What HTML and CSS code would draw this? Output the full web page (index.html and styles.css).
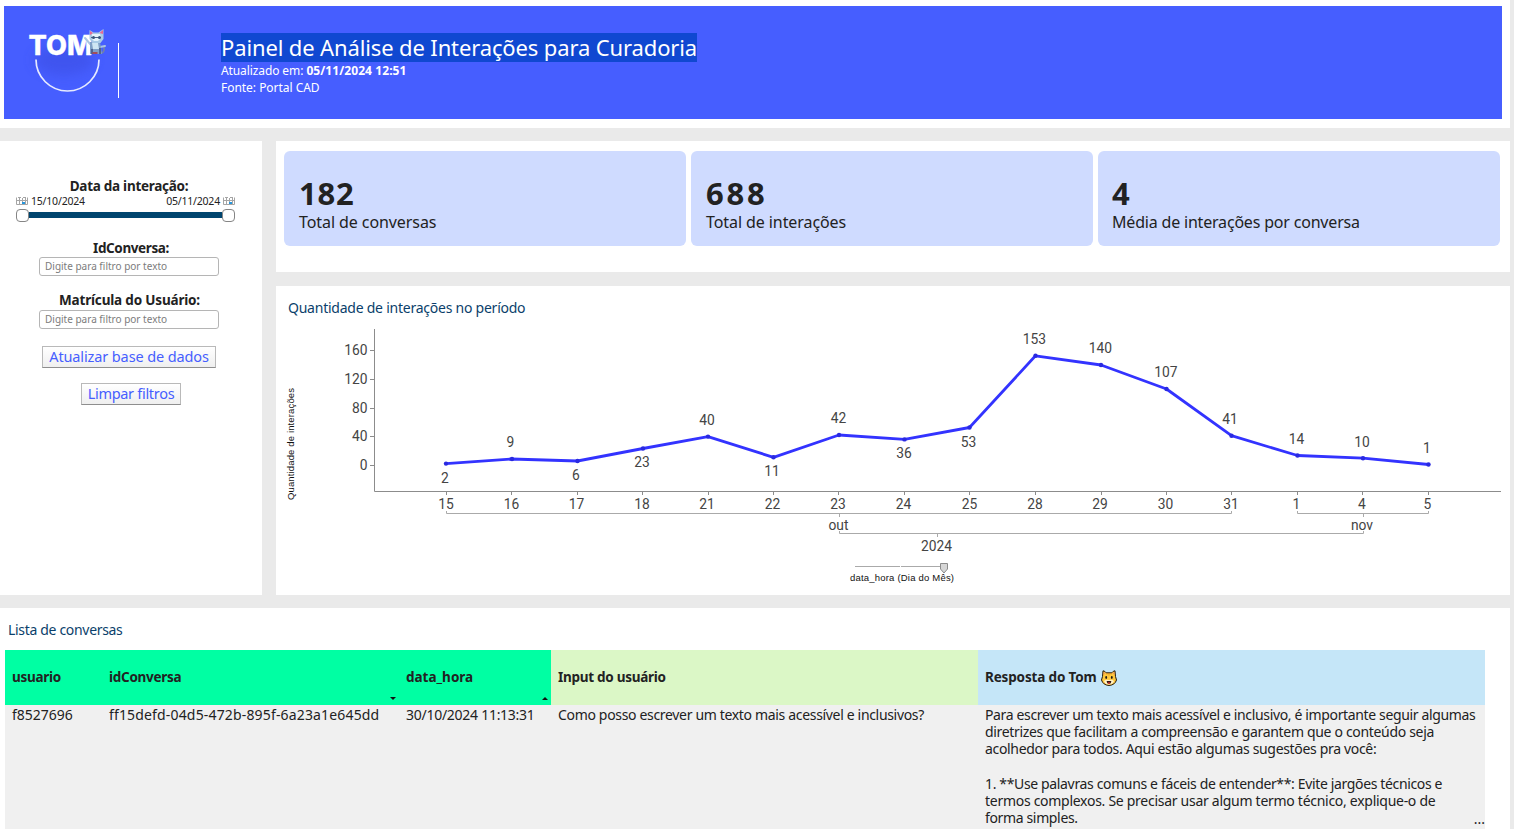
FILE: index.html
```html
<!DOCTYPE html>
<html lang="pt-BR">
<head>
<meta charset="utf-8">
<title>Painel de Análise de Interações para Curadoria</title>
<link rel="stylesheet" href="styles.css">
</head>
<body>
<header class="top">
  <div class="banner">
    <svg class="logo" viewBox="0 0 120 113" width="120" height="113">
      <defs><filter id="soft" x="-30%" y="-30%" width="160%" height="180%"><feGaussianBlur stdDeviation="6"/></filter></defs>
      <ellipse cx="60" cy="54" rx="30" ry="15" fill="#3748dc" opacity=".45" filter="url(#soft)"/>
      <text class="logo-text" x="24.500" y="48.800" textLength="64" lengthAdjust="spacingAndGlyphs">TOM</text>
      <path d="M32 53.500a31.500 31.500 0 0 0 63 0" fill="none" stroke="#e6eaff" stroke-width="1.700"/>
      <path d="M95 47q6 1 5-6" fill="none" stroke="#6f7fae" stroke-width="1.800"/>
      <path d="M87 39l-6-7M96 41l5-1" stroke="#a9c5e2" stroke-width="2" stroke-linecap="round"/>
      <path d="M86 36h10l2 12H86z" fill="#7f9fc6"/>
      <path d="M88 37h6l1 6h-6z" fill="#cfe6f3"/>
      <path d="M88 43v5M96 42v6" stroke="#46557f" stroke-width="1.600"/>
      <path d="M85.500 33V24l4 2.500h5l5-3.500v10l-3 4h-8z" fill="#a9cbe6"/>
      <path d="M86 29v-4l3 2zM99 28v-4l-3.500 3z" fill="#e96793"/>
      <path d="M88 28h8l1 4-3 3h-4l-2-2z" fill="#e5f3fb"/>
      <path d="M87 31.500h10" stroke="#4b6488" stroke-width="1"/>
      <circle cx="89.500" cy="31.500" r="1.500" fill="#36557c"/><circle cx="95.500" cy="31.500" r="1.500" fill="#36557c"/>
      <path d="M88.500 47h5" stroke="#a8434f" stroke-width="1.800"/>
      <path d="M114.500 37v55" stroke="#fff" stroke-width="1"/>
    </svg>
    <div class="heading">
      <h1>Painel de Análise de Interações para Curadoria</h1>
      <p><span class="updated">Atualizado em:</span> <b>05/11/2024 12:51</b></p>
      <p>Fonte: Portal CAD</p>
    </div>
  </div>
</header>
<div class="middle">
  <aside class="filters">
    <div class="label date-label">Data da interação:</div>
    <div class="dates">
      <svg width="12" height="8" viewBox="0 0 12 8"><path d="M.500.500v7h11v-7M3.500 1v6M6.500 1v6M9.500 0v7M0 3.500h12M2 .500h3M7 .500h2" fill="none" stroke="#a5a5a5"/><path d="M6 5h3v2H6z" fill="#2796dc"/></svg>
      <span>15/10/2024</span><i></i><span>05/11/2024</span>
      <svg width="12" height="8" viewBox="0 0 12 8"><path d="M.500.500v7h11v-7M3.500 1v6M6.500 1v6M9.500 0v7M0 3.500h12M2 .500h3M7 .500h2" fill="none" stroke="#a5a5a5"/><path d="M6 5h3v2H6z" fill="#2796dc"/></svg>
    </div>
    <div class="range"><span class="knob"></span><span class="track"></span><span class="knob"></span></div>
    <div class="label id-label">IdConversa:</div>
    <div class="field">Digite para filtro por texto</div>
    <div class="label user-label">Matrícula do Usuário:</div>
    <div class="field user-field">Digite para filtro por texto</div>
    <div class="btn update">Atualizar base de dados</div>
    <div class="btn clear">Limpar filtros</div>
  </aside>
  <main class="content">
    <section class="kpis">
      <div class="kpi"><strong>182</strong><span>Total de conversas</span></div>
      <div class="kpi"><strong class="wide">688</strong><span>Total de interações</span></div>
      <div class="kpi average"><strong>4</strong><span>Média de interações por conversa</span></div>
    </section>
    <section class="chart">
      <h2>Quantidade de interações no período</h2>
      <svg class="plot" viewBox="276 326 1234 269" width="1234" height="269">
        <g class="axis">
          <path d="M374.500 329v162.500H1501"/>
          <path d="M370 350.500h4M370 379.500h4M370 408.500h4M370 436.500h4M370 465.500h4"/>
          <path d="M446.500 491v4M511.500 491v4M577.500 491v4M642.500 491v4M708.500 491v4M773.500 491v4M838.500 491v4M904.500 491v4M969.500 491v4M1035.500 491v4M1101.500 491v4M1166.500 491v4M1231.500 491v4M1297.500 491v4M1362.500 491v4M1428.500 491v4"/>
        </g>
        <g class="bracket">
          <path d="M446.500 511v2.500h785V511M839.500 514v3M1297.500 511v2.500h131V511M1363.500 514v3"/>
          <path d="M839.500 531v2.500h524V531M937.500 534v3"/>
          <path d="M855 566.500h45M901 566.500h40"/>
        </g>
        <polyline class="line" points="446,463.600 511.500,459 577.500,461 643,448.500 708,436.600 773.500,457.300 839,435 904.500,439.400 969.500,427.500 1035.500,355.800 1101,365 1166.500,389 1231.500,435.700 1297.500,455.500 1363,458.200 1428.500,464.500"/>
        <g class="dots">
          <circle cx="446" cy="463.600" r="2.200"/><circle cx="512" cy="459" r="2.200"/><circle cx="577.500" cy="461" r="2.200"/><circle cx="643" cy="448.500" r="2.200"/><circle cx="708" cy="436.600" r="2.200"/><circle cx="773.500" cy="457.300" r="2.200"/><circle cx="839" cy="435" r="2.200"/><circle cx="904.500" cy="439.400" r="2.200"/><circle cx="969.500" cy="427.500" r="2.200"/><circle cx="1035.500" cy="355.800" r="2.200"/><circle cx="1101" cy="365" r="2.200"/><circle cx="1166.500" cy="389" r="2.200"/><circle cx="1231.500" cy="435.700" r="2.200"/><circle cx="1297.500" cy="455.500" r="2.200"/><circle cx="1363" cy="458.200" r="2.200"/><circle cx="1428.500" cy="464.500" r="2.200"/>
        </g>
        <g class="ylab">
          <text x="367.500" y="355">160</text><text x="367.500" y="384">120</text><text x="367.500" y="412.500">80</text><text x="367.500" y="441">40</text><text x="367.500" y="470">0</text>
        </g>
        <g class="num">
          <text x="445" y="482.500">2</text><text x="510.500" y="447">9</text><text x="576" y="480">6</text><text x="642" y="467">23</text><text x="707" y="425">40</text><text x="772" y="476">11</text><text x="838.500" y="423">42</text><text x="904" y="458">36</text><text x="968.500" y="446.500">53</text><text x="1034.500" y="344">153</text><text x="1100.500" y="353">140</text><text x="1166" y="377">107</text><text x="1230" y="424">41</text><text x="1296.500" y="443.500">14</text><text x="1362" y="446.500">10</text><text x="1427" y="453">1</text>
        </g>
        <g class="num">
          <text x="446" y="509">15</text><text x="511.500" y="509">16</text><text x="576.500" y="509">17</text><text x="642" y="509">18</text><text x="707" y="509">21</text><text x="772.500" y="509">22</text><text x="838" y="509">23</text><text x="903.500" y="509">24</text><text x="969.500" y="509">25</text><text x="1035" y="509">28</text><text x="1100" y="509">29</text><text x="1165.500" y="509">30</text><text x="1231" y="509">31</text><text x="1296.500" y="509">1</text><text x="1362" y="509">4</text><text x="1427.500" y="509">5</text>
          <text x="838.500" y="530">out</text><text x="1362" y="530">nov</text><text x="936.500" y="550.500">2024</text>
        </g>
        <path d="M940.500 563.500h7v5.500l-3.500 4-3.500-4z" fill="#d6d6d6" stroke="#8b8b8b"/>
        <text class="tiny" x="850" y="581" textLength="104">data_hora (Dia do Mês)</text>
        <text class="tiny" transform="translate(294 500) rotate(-90)" textLength="112">Quantidade de interações</text>
      </svg>
    </section>
  </main>
</div>
<section class="list">
  <h2>Lista de conversas</h2>
  <div class="table">
    <div class="th green">usuario</div>
    <div class="th green">idConversa<svg class="sort" width="6" height="3" viewBox="0 0 6 3"><path d="M0 0h6L3 3z" fill="#111"/></svg></div>
    <div class="th green hour">data_hora<svg class="sort" width="6" height="3" viewBox="0 0 6 3"><path d="M0 3h6L3 0z" fill="#111"/></svg></div>
    <div class="th lime">Input do usuário</div>
    <div class="th sky">Resposta do Tom
      <svg class="cat" width="16" height="16" viewBox="0 0 16 16"><path d="M2 .800q2 .200 3.200 2h5.600q1.200-1.800 3.200-2l.500 5.700 1 3.500q-1.500 5-7.500 5.500Q2 15 .500 10l1-3.500z" fill="#ffc83d" stroke="#241a10" stroke-width="1"/><path d="M2.700 2.200v2.600l1.800-1.800zM13.300 2.200v2.600l-1.800-1.800z" fill="#ef8b62"/><path d="M8 3v2.500M6 3v1.500M10 3v1.500" stroke="#d77c1b" stroke-width=".600"/><path d="M3 11q2-2 5-1 3-1 5 1-1 3.500-5 3.500T3 11z" fill="#fff0c4"/><ellipse cx="5.200" cy="7.500" rx=".900" ry="1.400" fill="#1b1713"/><ellipse cx="10.800" cy="7.500" rx=".900" ry="1.400" fill="#1b1713"/><path d="M5.700 11h4.600q-.300 3-2.300 3t-2.300-3z" fill="#31120e"/><path d="M6.800 12.700q1.200-.700 2.400 0-.300 1.200-1.200 1.200t-1.200-1.200z" fill="#ef3c36"/></svg>
    </div>
    <div class="td user">f8527696</div>
    <div class="td conversation">ff15defd-04d5-472b-895f-6a23a1e645dd</div>
    <div class="td time">30/10/2024 11:13:31</div>
    <div class="td question">Como posso escrever um texto mais acessível e inclusivos?</div>
    <div class="td answer">Para escrever um texto mais acessível e inclusivo, é importante seguir algumas<br><span class="mid">diretrizes que facilitam a compreensão e garantem que o conteúdo seja</span><br><span class="mid">acolhedor para todos. Aqui estão algumas sugestões pra você:</span><br><br>1. **Use palavras comuns e fáceis de entender**: Evite jargões técnicos e<br><span class="loose">termos complexos. Se precisar usar algum termo técnico, explique-o de</span><br>forma simples.<span class="more">...</span></div>
  </div>
</section>
</body>
</html>
```
FILE: styles.css
```css
* { box-sizing: border-box; }
body {
  margin: 0;
  height: 829px;
  overflow: hidden;
  background: #eaeaea;
  color: #222;
  font: 14px/17.200px "Noto Sans", sans-serif;
  display: flex;
  flex-direction: column;
}
h1, h2, p { margin: 0; font-weight: 400; }
.top { width: 1510px; height: 128px; padding: 6px 8px 9px 4px; background: #fff; }
.banner { height: 113px; display: flex; background: #465eff; color: #fff; }
.logo-text { font: 800 27px Inter, sans-serif; fill: #fff; stroke: #fff; stroke-width: .300px; }
.heading { margin-left: 97px; padding-top: 27px; white-space: nowrap; }
h1 { width: 476px; height: 29px; background: #1048d1; font-size: 22px; line-height: 28px; letter-spacing: -.130px; }
.heading p { font-size: 12px; line-height: 17px; letter-spacing: -.030px; }
.heading .updated { letter-spacing: -.100px; }
.heading b { letter-spacing: .080px; }
.middle { display: flex; gap: 14px; height: 454px; margin-top: 13px; }
.filters { width: 262px; background: #fff; display: flex; flex-direction: column; align-items: center; padding-top: 36px; white-space: nowrap; }
.label { font-weight: 700; font-size: 13.500px; height: 18px; line-height: 18px; }
.date-label { margin-right: 4px; letter-spacing: -.270px; }
.dates { width: 219px; height: 12px; margin-right: 11px; display: flex; align-items: center; gap: 3px; font-size: 10.500px; line-height: 12px; letter-spacing: -.200px; }
.dates i { flex: 1; }
.range { width: 219px; height: 16px; margin-right: 11px; display: flex; align-items: center; }
.knob { width: 13px; height: 13px; border: 1px solid #858585; border-radius: 4px; background: #fff; }
.track { flex: 1; height: 6px; background: #00456f; }
.id-label { margin-top: 16px; letter-spacing: -.380px; }
.field { width: 180px; height: 19px; margin-right: 4px; border: 1px solid #b5b5b5; border-radius: 3px; padding-left: 5px; color: #7c7c7c; font-size: 10px; line-height: 17px; }
.user-label { margin-top: 15px; margin-right: 3px; letter-spacing: -.180px; }
.user-field { margin-top: 1px; }
.btn { border: 1px solid #b9b9b9; border-bottom-color: #8e8e8e; background: linear-gradient(#fff, #efefef); color: #465eff; text-align: center; height: 22px; line-height: 19px; font-size: 14.500px; }
.update { width: 174px; margin-top: 17px; margin-right: 4px; letter-spacing: -.120px; }
.clear { width: 100px; margin-top: 15px; letter-spacing: -.300px; }
.content { width: 1234px; display: flex; flex-direction: column; gap: 14px; }
.kpis { height: 131px; padding: 10px 10px 26px 8px; display: grid; grid-template-columns: repeat(3, 402px); gap: 5px; background: #fff; }
.kpi { display: flex; flex-direction: column; align-items: flex-start; background: #cfdbff; border-radius: 6px; padding: 26px 15px 0; font-size: 16px; line-height: 22px; letter-spacing: -.080px; }
.kpi strong { height: 34px; font-size: 31px; line-height: 33px; letter-spacing: .800px; }
.kpi .wide { letter-spacing: 2.800px; }
.average { padding-left: 14px; letter-spacing: -.190px; }
.chart { height: 309px; background: #fff; }
h2 { color: #0b3f6b; font-size: 14px; line-height: 20px; }
.chart h2 { height: 40px; padding: 12px 0 0 12px; letter-spacing: -.240px; }
.plot { display: block; }
.axis path { stroke: #8c8c8c; fill: none; }
.bracket path { stroke: #aaa; fill: none; }
.line { stroke: #3333ff; stroke-width: 2.800; fill: none; stroke-linejoin: round; }
.dots { fill: #2a2ae0; }
.num text, .ylab text { font: 13.800px Roboto, sans-serif; fill: #444; text-anchor: middle; }
.ylab text { text-anchor: end; }
.tiny { font: 9.500px "Liberation Sans", sans-serif; fill: #111; }
.list { width: 1510px; height: 221px; margin-top: 13px; background: #fff; padding-left: 5px; }
.list h2 { height: 42px; padding: 12px 0 0 3px; letter-spacing: -.320px; }
.table { width: 1480px; display: grid; grid-template-columns: 97px 297px 152px 427px 507px; grid-template-rows: 55px 124px; white-space: nowrap; }
.th { position: relative; padding-left: 7px; display: flex; align-items: center; font-weight: 700; font-size: 13.500px; letter-spacing: -.270px; }
.green { background: #00ffa3; }
.hour { letter-spacing: 0; }
.lime { background: #dbf7c6; }
.sky { background: #c5e6f8; letter-spacing: -.150px; }
.cat { margin: 0 0 0 4px; }
.sort { position: absolute; right: 3px; bottom: 5px; }
.td { position: relative; padding: 1px 0 0 7px; background: #f0f0f0; }
.conversation { letter-spacing: .160px; }
.time { letter-spacing: -.270px; }
.question { letter-spacing: -.330px; }
.answer { letter-spacing: -.355px; }
.mid { letter-spacing: -.325px; }
.loose { letter-spacing: -.280px; }
.more { position: absolute; right: 0; bottom: 2px; letter-spacing: 0; }
```
